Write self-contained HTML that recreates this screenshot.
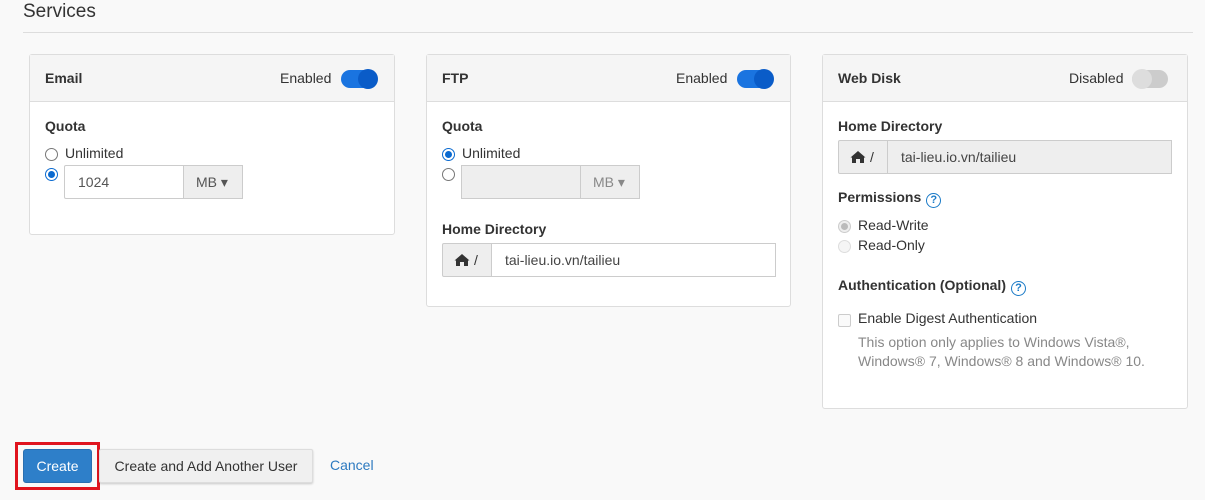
<!DOCTYPE html>
<html><head><meta charset="utf-8"><style>
*{box-sizing:border-box;margin:0;padding:0}
body{width:1205px;height:500px;background:#f9f9f9;font-family:"Liberation Sans",sans-serif;font-size:14px;color:#333;position:relative;overflow:hidden}
.a{position:absolute}
.panel{position:absolute;background:#fff;border:1px solid #ddd;border-radius:3px}
.hd{height:47px;background:#f5f5f5;border-bottom:1px solid #ddd;position:relative}
.hd b{position:absolute;left:15px;top:15px;font-size:14px}
.tg{position:absolute;top:15px;font-size:14px}
.sw{position:absolute;top:15px;width:36px;height:18px;border-radius:9px}
.sw i{position:absolute;top:-1px;width:20px;height:20px;border-radius:50%}
.lbl{position:absolute;font-weight:bold;font-size:14px}
.rad{position:absolute;width:13px;height:13px;border-radius:50%;border:1px solid #777;background:#fff}
.rad.on{border-color:#0a6ad0}
.rad.on:after{content:"";position:absolute;left:2px;top:2px;width:7px;height:7px;border-radius:50%;background:#0a6ad0}
.box{position:absolute;border:1px solid #ccc;height:34px}
.help{display:inline-block;width:15px;height:15px;border:1.5px solid #1a7ac7;border-radius:50%;color:#1a7ac7;font-size:11px;line-height:12px;text-align:center;font-weight:bold;vertical-align:-1px;margin-left:5px}
.hm{position:absolute;left:11px;top:9px}
</style></head><body>
<div class="a" style="left:23px;top:1px;font-size:19px;color:#333">Services</div>
<div class="a" style="left:23px;top:32px;width:1170px;height:1px;background:#ddd"></div>

<!-- Email -->
<div class="panel" style="left:29px;top:54px;width:366px;height:181px">
<div class="hd"><b>Email</b><span class="tg" style="left:250px">Enabled</span><div class="sw" style="left:311px;background:#1a74e0"><i style="left:17px;background:#0a5cc8"></i></div></div>
<div class="lbl" style="left:15px;top:63px">Quota</div>
<div class="rad" style="left:15px;top:93px"></div><div class="a" style="left:35px;top:90px">Unlimited</div>
<div class="rad on" style="left:15px;top:113px"></div>
<div class="box" style="left:34px;top:110px;width:120px;background:#fff;border-radius:2px 0 0 2px"><span class="a" style="left:13px;top:8px;color:#555">1024</span></div>
<div class="box" style="left:153px;top:110px;width:60px;background:#eee"><span class="a" style="left:12px;top:8px;color:#555">MB ▾</span></div>
</div>

<!-- FTP -->
<div class="panel" style="left:426px;top:54px;width:365px;height:253px">
<div class="hd"><b>FTP</b><span class="tg" style="left:249px">Enabled</span><div class="sw" style="left:310px;background:#1a74e0"><i style="left:17px;background:#0a5cc8"></i></div></div>
<div class="lbl" style="left:15px;top:63px">Quota</div>
<div class="rad on" style="left:15px;top:93px"></div><div class="a" style="left:35px;top:90px">Unlimited</div>
<div class="rad" style="left:15px;top:113px"></div>
<div class="box" style="left:34px;top:110px;width:120px;background:#eee"></div>
<div class="box" style="left:153px;top:110px;width:60px;background:#eee"><span class="a" style="left:12px;top:8px;color:#888">MB ▾</span></div>
<div class="lbl" style="left:15px;top:166px">Home Directory</div>
<div class="box" style="left:15px;top:188px;width:50px;background:#eee;border-radius:2px 0 0 2px"><svg class="hm" width="28" height="14" viewBox="0 0 28 14"><path d="M8 1 L0.5 7.5 L2 7.5 L2 13 L6 13 L6 9 L10 9 L10 13 L14 13 L14 7.5 L15.5 7.5 Z" fill="#333"/><text x="20" y="12" font-size="14" fill="#333" font-family="Liberation Sans">/</text></svg></div>
<div class="box" style="left:64px;top:188px;width:285px;background:#fff"><span class="a" style="left:13px;top:8px;color:#444">tai-lieu.io.vn/tailieu</span></div>
</div>

<!-- Web Disk -->
<div class="panel" style="left:822px;top:54px;width:366px;height:355px">
<div class="hd"><b>Web Disk</b><span class="tg" style="left:246px">Disabled</span><div class="sw" style="left:309px;background:#ccc"><i style="left:0;background:#ddd"></i></div></div>
<div class="lbl" style="left:15px;top:63px">Home Directory</div>
<div class="box" style="left:15px;top:85px;width:50px;background:#eee;border-radius:2px 0 0 2px"><svg class="hm" width="28" height="14" viewBox="0 0 28 14"><path d="M8 1 L0.5 7.5 L2 7.5 L2 13 L6 13 L6 9 L10 9 L10 13 L14 13 L14 7.5 L15.5 7.5 Z" fill="#333"/><text x="20" y="12" font-size="14" fill="#333" font-family="Liberation Sans">/</text></svg></div>
<div class="box" style="left:64px;top:85px;width:285px;background:#eee"><span class="a" style="left:13px;top:8px;color:#444">tai-lieu.io.vn/tailieu</span></div>
<div class="lbl" style="left:15px;top:134px">Permissions<span class="help">?</span></div>
<div class="rad" style="left:15px;top:165px;border-color:#ccc;background:#eee"><span class="a" style="left:2px;top:2px;width:7px;height:7px;border-radius:50%;background:#bbb"></span></div><div class="a" style="left:35px;top:162px">Read-Write</div>
<div class="rad" style="left:15px;top:185px;border-color:#ddd;background:#f5f5f5"></div><div class="a" style="left:35px;top:182px">Read-Only</div>
<div class="lbl" style="left:15px;top:222px">Authentication (Optional)<span class="help">?</span></div>
<div class="a" style="left:15px;top:259px;width:13px;height:13px;border:1px solid #ccc;border-radius:2px;background:#fafafa"></div>
<div class="a" style="left:35px;top:255px">Enable Digest Authentication</div>
<div class="a" style="left:35px;top:278px;color:#888;line-height:19px">This option only applies to Windows Vista®,<br>Windows® 7, Windows® 8 and Windows® 10.</div>
</div>

<!-- Buttons -->
<div class="a" style="left:15px;top:442px;width:85px;height:48px;border:3px solid #e0141e"></div>
<div class="a" style="left:23px;top:449px;width:69px;height:34px;background:#2e7fc9;border:1px solid #2a6fb0;border-radius:3px;color:#fff;text-align:center;line-height:32px">Create</div>
<div class="a" style="left:99px;top:449px;width:214px;height:34px;background:#f0f0f0;border:1px solid #ddd;border-radius:2px;box-shadow:0 1px 2px rgba(0,0,0,.2);text-align:center;line-height:32px;color:#333">Create and Add Another User</div>
<div class="a" style="left:330px;top:457px;color:#2d7ac0">Cancel</div>
</body></html>
